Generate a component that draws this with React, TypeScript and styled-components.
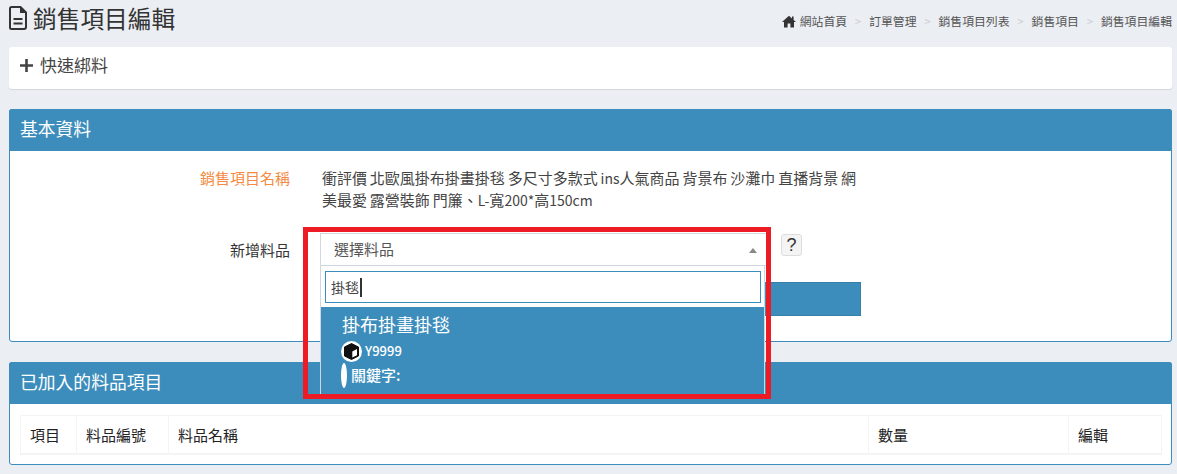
import React from "react";
import styled, { createGlobalStyle } from "styled-components";

const Global = createGlobalStyle`
  html, body { margin: 0; padding: 0; background: #ebeef3; }
  body { font-family: "Noto Sans CJK TC", "Noto Sans", sans-serif; color: #333; font-size: 15px; overflow: hidden; }
  * { box-sizing: border-box; }
`;

const Page = styled.div`
  width: 1177px;
  height: 474px;
  padding: 0 5px 0 9px;
  overflow: hidden;
`;
const TopBar = styled.header`
  height: 47px;
  display: flex;
  justify-content: space-between;
  align-items: flex-start;
`;
const Title = styled.h1`
  margin: 0;
  display: flex;
  align-items: center;
  gap: 6px;
  height: 36px;
  font-size: 23.7px;
  font-weight: 400;
  line-height: 36px;
  color: #333;
`;
const Crumbs = styled.nav`
  display: flex;
  align-items: center;
  height: 16px;
  margin-top: 13px;
  font-size: 11.85px;
  line-height: 16px;
  color: #555;
`;
const Crumb = styled.span`
  display: flex;
  align-items: center;
  gap: 4px;
  white-space: nowrap;
`;
const Sep = styled.span`
  color: #ccc;
  width: 22px;
  text-align: center;
  font-size: 11px;
`;
const QuickBar = styled.div`
  height: 42px;
  background: #fff;
  border-radius: 3px;
  box-shadow: 0 1px 1px rgba(0, 0, 0, 0.1);
  display: flex;
  align-items: center;
  gap: 6px;
  padding: 0 10px 8px;
  font-size: 17px;
  color: #444;
  margin-bottom: 20px;
`;
const PlusIcon = styled.svg`
  margin-top: 2px;
`;
const Panel = styled.section<{ $height: number }>`
  height: ${(p) => p.$height}px;
  background: #fff;
  border: 1px solid #3c8dbc;
  border-radius: 3px;
  margin-bottom: 20px;
`;
const PanelHead = styled.h2`
  margin: -1px -1px 0;
  height: 42px;
  background: #3c8dbc;
  color: #fff;
  border-radius: 3px 3px 0 0;
  font-size: 17.8px;
  font-weight: 400;
  line-height: 38px;
  padding: 0 11px;
`;
const FormRow = styled.div`
  display: grid;
  grid-template-columns: 280px 1fr;
  column-gap: 30px;
  position: relative;
`;
const Label = styled.div<{ $accent?: boolean }>`
  text-align: right;
  font-size: 15px;
  line-height: 22px;
  color: ${(p) => (p.$accent ? "#f58a42" : "#333")};
`;
const NameValue = styled.div`
  padding-left: 2px;
`;
const NameLine = styled.div`
  font-size: 15px;
  line-height: 22px;
  word-spacing: -0.5px;
  white-space: nowrap;
  color: #444;
`;
const Latin = styled.span`
  font-size: 14px;
`;
const NameRow = styled(FormRow)`
  padding-top: 16px;
`;
const PickRow = styled(FormRow)`
  margin-top: 22px;
  height: 83px;
`;
const PickLabel = styled(Label)`
  padding-top: 6px;
`;
const PickCell = styled.div`
  position: relative;
  display: flex;
  align-items: flex-start;
`;
const Select = styled.div`
  position: relative;
  width: 447px;
`;
const SelectBox = styled.div`
  height: 33px;
  border: 1px solid #d2d6de;
  background: #fff;
  padding: 0 13px;
  font-size: 15px;
  line-height: 29px;
  color: #555;
  position: relative;
`;
const Caret = styled.i`
  position: absolute;
  right: 9px;
  top: 14px;
  width: 0;
  height: 0;
  border-left: 4px solid transparent;
  border-right: 4px solid transparent;
  border-bottom: 5px solid #888;
`;
const Help = styled.button`
  margin: 1px 0 0 14px;
  width: 21px;
  height: 22px;
  padding: 0;
  border: 1px solid #ddd;
  border-radius: 3px;
  background: #f4f4f4;
  color: #333;
  font: 400 18px/20px "Liberation Sans", sans-serif;
`;
const AddButton = styled.div`
  position: absolute;
  left: 0;
  top: 49px;
  width: 541px;
  height: 34px;
  background: #3c8dbc;
  border: 1px solid #367fa9;
`;
const Drop = styled.div`
  position: absolute;
  z-index: 2;
  left: 0;
  top: 33px;
  width: 445px;
  height: 130px;
  background: #fff;
  border: 1px solid #d2d6de;
  border-top: 0;
  overflow: hidden;
`;
const SearchWrap = styled.div`
  padding: 5px 3px 4px 4px;
`;
const SearchBox = styled.div`
  height: 32px;
  border: 1px solid #3c8dbc;
  padding: 0 5px;
  display: flex;
  align-items: center;
  font-size: 14px;
  color: #444;
`;
const Cursor = styled.i`
  display: inline-block;
  width: 2px;
  height: 19px;
  margin-left: 1px;
  background: #333;
`;
const Option = styled.div`
  background: #3c8dbc;
  color: #fff;
  height: 100px;
  padding: 3px 20px;
`;
const OptName = styled.div`
  margin-left: 1px;
  height: 29px;
  font-size: 18px;
  line-height: 28px;
`;
const OptLine = styled.div<{ $size: number }>`
  display: flex;
  align-items: center;
  gap: 3px;
  font-size: ${(p) => p.$size}px;
  font-weight: 500;
  line-height: 24px;
  height: 24px;
`;
const Circle = styled.span`
  width: 21px;
  height: 21px;
  border-radius: 50%;
  background: #fff;
  display: flex;
  align-items: center;
  justify-content: center;
`;
const Sliver = styled.span`
  width: 6px;
  height: 25px;
  margin-right: 1px;
  border-radius: 50%;
  background: #fff;
`;
const RedFrame = styled.div`
  position: absolute;
  z-index: 3;
  left: 303px;
  top: 227px;
  width: 468px;
  height: 172px;
  border: 5px solid #ed1c24;
  pointer-events: none;
`;
const TableWrap = styled.div`
  padding: 11px 10px 0;
`;
const Table = styled.table`
  width: 1141px;
  border-collapse: collapse;
  table-layout: fixed;
  border-bottom: 2px solid #f4f4f4;
`;
const Th = styled.th<{ $w: number }>`
  width: ${(p) => p.$w}px;
  height: 38px;
  border: 1px solid #f4f4f4;
  border-bottom: 0;
  padding: 0 9px;
  text-align: left;
  font-size: 15px;
  font-weight: 400;
  color: #222;
`;

const cols: [string, number][] = [
  ["項目", 56],
  ["料品編號", 92],
  ["料品名稱", 700],
  ["數量", 200],
  ["編輯", 93],
];
const crumbs = ["訂單管理", "銷售項目列表", "銷售項目", "銷售項目編輯"];

export default function App() {
  return (
    <Page>
      <Global />
      <TopBar>
        <Title>
          <svg width="18" height="24" viewBox="0 0 18 24" fill="none">
            <path d="M2.5 1H11.5L17 6.5V21a2 2 0 0 1-2 2H2.5A1.5 1.5 0 0 1 1 21.5V2.5A1.5 1.5 0 0 1 2.5 1Z" stroke="#333" strokeWidth="2" />
            <path d="M11 1V7H17L11 1Z" fill="#333" />
            <path d="M4.5 13h9M4.5 17.5h9" stroke="#333" strokeWidth="2" />
          </svg>
          銷售項目編輯
        </Title>
        <Crumbs>
          <Crumb>
            <svg width="14" height="13" viewBox="0 0 14 13">
              <path d="M7 .8 0 7h2v5.5h3.6V8.6h2.8v3.9H12V7h2L11.6 4.9V1.5H10v2L7 .8Z" fill="#333" />
            </svg>
            網站首頁
          </Crumb>
          {crumbs.map((c) => (
            <React.Fragment key={c}>
              <Sep>&gt;</Sep>
              <Crumb>{c}</Crumb>
            </React.Fragment>
          ))}
        </Crumbs>
      </TopBar>
      <QuickBar>
        <PlusIcon width="15" height="15" viewBox="0 0 15 15">
          <path d="M7.5 1v13M1 7.5h13" stroke="#444" strokeWidth="2.6" />
        </PlusIcon>
        快速綁料
      </QuickBar>
      <Panel $height={233}>
        <PanelHead>基本資料</PanelHead>
        <NameRow>
          <Label $accent>銷售項目名稱</Label>
          <NameValue>
            <NameLine>
              衝評價 北歐風掛布掛畫掛毯 多尺寸多款式 <Latin>ins</Latin>人氣商品 背景布 沙灘巾 直播背景 網
            </NameLine>
            <NameLine>
              美最愛 露營裝飾 門簾、<Latin>L-</Latin>寬<Latin>200*</Latin>高<Latin>150cm</Latin>
            </NameLine>
          </NameValue>
        </NameRow>
        <PickRow>
          <PickLabel>新增料品</PickLabel>
          <PickCell>
            <AddButton />
            <Select>
              <SelectBox>
                選擇料品
                <Caret />
              </SelectBox>
              <Drop>
                <SearchWrap>
                  <SearchBox>
                    掛毯
                    <Cursor />
                  </SearchBox>
                </SearchWrap>
                <Option>
                  <OptName>掛布掛畫掛毯</OptName>
                  <OptLine $size={13}>
                    <Circle>
                      <svg width="17" height="17" viewBox="0 0 17 17">
                        <path d="M8.5.5 15.5 4v9l-7 3.5-7-3.5V4L8.5.5Z" fill="#111" stroke="#111" strokeLinejoin="round" />
                        <path d="M9.3 8.4 14 6v6.2l-4.7 2.4Z" fill="#fff" />
                      </svg>
                    </Circle>
                    Y9999
                  </OptLine>
                  <OptLine $size={15}>
                    <Sliver />
                    關鍵字:
                  </OptLine>
                </Option>
              </Drop>
            </Select>
            <Help>?</Help>
          </PickCell>
        </PickRow>
      </Panel>
      <Panel $height={103}>
        <PanelHead>已加入的料品項目</PanelHead>
        <TableWrap>
          <Table>
            <thead>
              <tr>
                {cols.map(([n, w]) => (
                  <Th key={n} $w={w}>{n}</Th>
                ))}
              </tr>
            </thead>
          </Table>
        </TableWrap>
      </Panel>
      <RedFrame />
    </Page>
  );
}
